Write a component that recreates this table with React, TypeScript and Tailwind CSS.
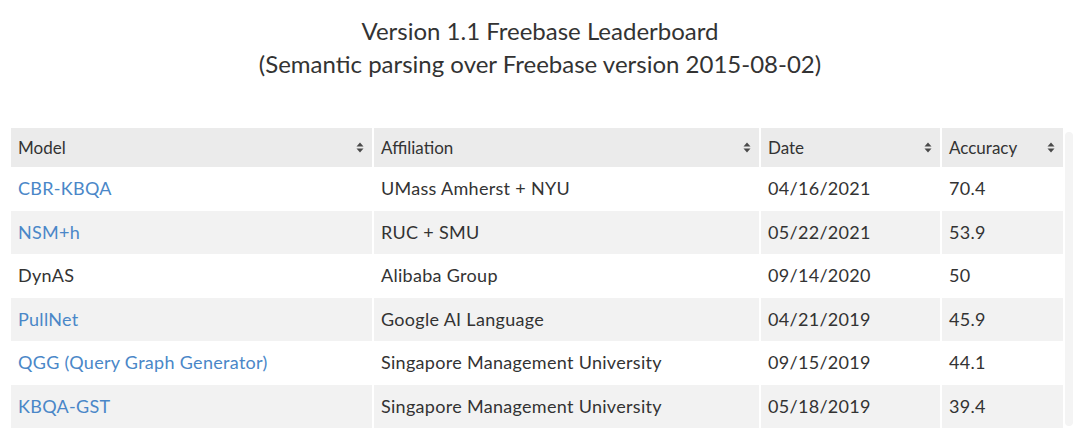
import React from 'react';

interface Row {
  model: string;
  link: boolean;
  affiliation: string;
  date: string;
  accuracy: string;
}

const rows: Row[] = [
  { model: 'CBR-KBQA', link: true, affiliation: 'UMass Amherst + NYU', date: '04/16/2021', accuracy: '70.4' },
  { model: 'NSM+h', link: true, affiliation: 'RUC + SMU', date: '05/22/2021', accuracy: '53.9' },
  { model: 'DynAS', link: false, affiliation: 'Alibaba Group', date: '09/14/2020', accuracy: '50' },
  { model: 'PullNet', link: true, affiliation: 'Google AI Language', date: '04/21/2019', accuracy: '45.9' },
  { model: 'QGG (Query Graph Generator)', link: true, affiliation: 'Singapore Management University', date: '09/15/2019', accuracy: '44.1' },
  { model: 'KBQA-GST', link: true, affiliation: 'Singapore Management University', date: '05/18/2019', accuracy: '39.4' },
];

const SortIcon = () => (
  <svg width="8" height="11" viewBox="0 0 8 11" className="shrink-0">
    <path d="M4 0.5 L7.5 4.5 H0.5 Z" fill="#4a4a4a" />
    <path d="M4 10.5 L7.5 6.5 H0.5 Z" fill="#4a4a4a" />
  </svg>
);

const headers = ['Model', 'Affiliation', 'Date', 'Accuracy'];

const App: React.FC = () => {
  return (
    <div className="w-[1080px] h-[435px] bg-white text-[#333] font-['Lato','Noto_Sans',sans-serif] overflow-hidden">
      <div className="pt-[14px] text-center text-[24px] leading-[33px] text-[#333]">
        <div>Version 1.1 Freebase Leaderboard</div>
        <div>(Semantic parsing over Freebase version 2015-08-02)</div>
      </div>

      <div className="flex mt-[48px] ml-[11px]">
        <div className="flex flex-col">
          <div className="grid grid-cols-[361px_385px_179px_121px] gap-x-[2px] h-[39px]">
            {headers.map((h) => (
              <div key={h} className="bg-[#ebebeb] flex items-center justify-between pl-[7px] pr-[8px] text-[17px]">
                <span>{h}</span>
                <SortIcon />
              </div>
            ))}
          </div>
          {rows.map((r, i) => {
            const bg = i % 2 === 1 ? 'bg-[#f2f2f2]' : 'bg-white';
            return (
              <div key={r.model} className="grid grid-cols-[361px_385px_179px_121px] gap-x-[2px] h-[43.5px] text-[18px] tracking-[0.3px]">
                <div className={`${bg} flex items-center pl-[7px]`}>
                  <span className={r.link ? 'text-[#4a87c8]' : ''}>{r.model}</span>
                </div>
                <div className={`${bg} flex items-center pl-[7px]`}>{r.affiliation}</div>
                <div className={`${bg} flex items-center pl-[7px]`}>{r.date}</div>
                <div className={`${bg} flex items-center pl-[7px]`}>{r.accuracy}</div>
              </div>
            );
          })}
        </div>
        <div className="ml-[2px] mt-[4px] w-[8px] h-[294px] rounded-[4px] bg-[#f4f4f4]" />
      </div>
    </div>
  );
};

export default App;
